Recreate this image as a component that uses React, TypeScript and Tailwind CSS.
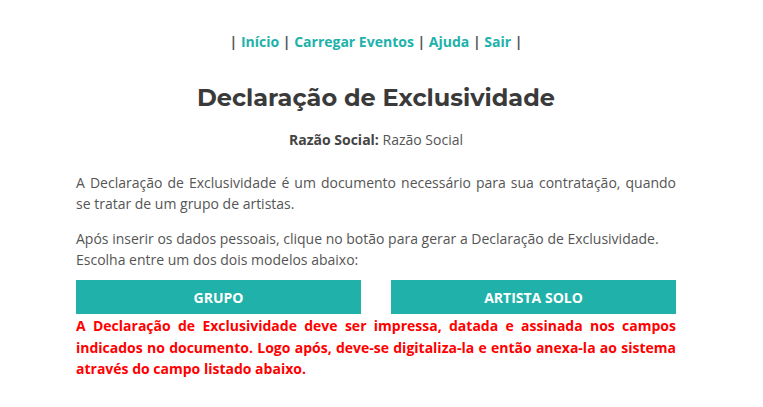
const links = ["Início", "Carregar Eventos", "Ajuda", "Sair"]

export default function App() {
    return (
        <div className="min-h-[407px] bg-white text-[#444] font-['Open_Sans',sans-serif]">
            <main className="ml-[76px] w-[600px] pt-[32px]">
                <nav className="text-center text-[14px] font-bold leading-[20px] text-[#555]">
                    |{" "}
                    {links.map(name => (
                        <span key={name}>
                            <a href="#" className="text-[#20b2aa]">{name}</a>{" "}|{" "}
                        </span>
                    ))}
                </nav>

                <h1 className="mt-[30px] text-center text-[24px] font-bold leading-[32px] text-[#3a3a3a] font-['Montserrat','DejaVu_Sans',sans-serif]">
                    Declaração de Exclusividade
                </h1>

                <p className="mt-[16px] text-center text-[14px] leading-[20px]">
                    <b>Razão Social:</b> <span className="text-[#555]">Razão Social</span>
                </p>

                <p className="mt-[22px] text-justify text-[14px] leading-[21px] text-[#555]">
                    A Declaração de Exclusividade é um documento necessário para sua contratação, quando se tratar de um grupo de artistas.
                </p>
                <p className="mt-[14px] text-[14px] leading-[21px] text-[#555]">
                    Após inserir os dados pessoais, clique no botão para gerar a Declaração de Exclusividade. Escolha entre um dos dois modelos abaixo:
                </p>

                <div className="mt-[10px] flex gap-[30px]">
                    <button className="h-[34px] flex-1 bg-[#20b2aa] text-[14px] font-bold text-white">GRUPO</button>
                    <button className="h-[34px] flex-1 bg-[#20b2aa] text-[14px] font-bold text-white">ARTISTA SOLO</button>
                </div>

                <p className="mt-[1px] text-justify text-[14px] font-bold leading-[21.5px] text-[#ff0000]">
                    A Declaração de Exclusividade deve ser impressa, datada e assinada nos campos indicados no documento. Logo após, deve-se digitaliza-la e então anexa-la ao sistema através do campo listado abaixo.
                </p>
            </main>
        </div>
    )
}
